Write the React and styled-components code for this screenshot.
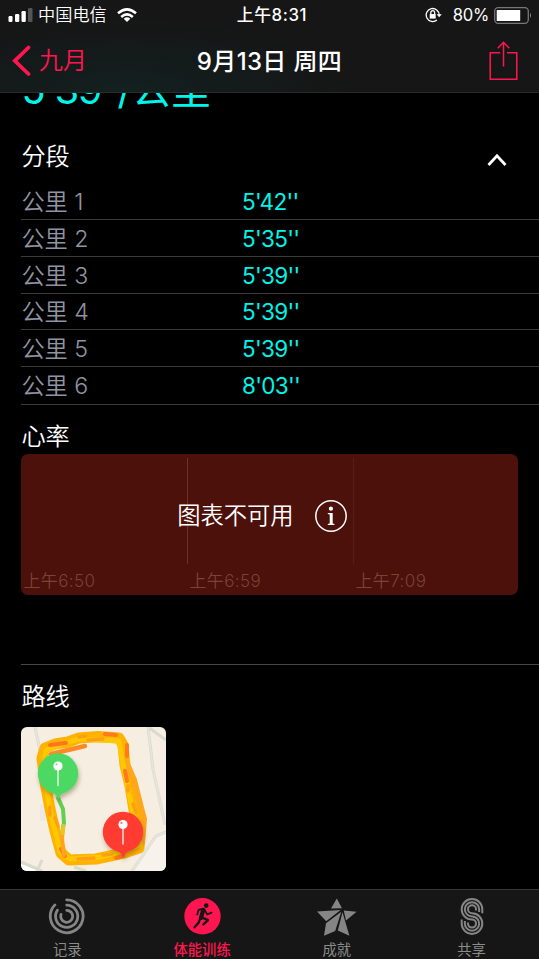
import React from "react";
import styled, { createGlobalStyle } from "styled-components";

const PINK = "#ff1650";
const CYAN = "#00f5ea";

const GlobalStyle = createGlobalStyle`
  * { box-sizing: border-box; }
  body { margin: 0; background: #000; }
`;

const Screen = styled.div`
  width: 539px;
  height: 959px;
  display: flex;
  flex-direction: column;
  overflow: hidden;
  background: #000;
  color: #fff;
  font-family: Inter, "Noto Sans CJK SC", sans-serif;
  white-space: nowrap;
`;

const Header = styled.header`
  flex: none;
  height: 93px;
  background: radial-gradient(ellipse 230px 75px at 125px 100%, #12211f, #141b1b 45%, #161616 100%);
  border-bottom: 1px solid #2b2b2b;
`;

const StatusBar = styled.div`
  height: 30px;
  display: grid;
  grid-template-columns: 1fr auto 1fr;
  align-items: center;
  padding: 0 7px 0 8px;
  font-size: 17px;
  line-height: 30px;
`;

const StatusGroup = styled.div`
  display: flex;
  align-items: center;
  justify-content: ${(p) => (p.$end ? "flex-end" : "flex-start")};
`;

const Carrier = styled.span`
  margin: 0 10px 0 5px;
  font-size: 17.2px;
  font-weight: 350;
`;

const Clock = styled.span`
  font-weight: 500;
  font-size: 16.8px;
  letter-spacing: 0.6px;
  padding-left: 4px;
`;

const Percent = styled.span`
  margin: 0 5px 0 11px;
  font-size: 16.6px;
  letter-spacing: -0.3px;
`;

const NavBar = styled.nav`
  height: 62px;
  display: grid;
  grid-template-columns: 1fr auto 1fr;
  align-items: center;
  padding: 0 20px 0 12px;
`;

const BackButton = styled.a`
  display: flex;
  align-items: center;
  gap: 8px;
  color: ${PINK};
  font-size: 24px;
  font-weight: 350;
  line-height: 34px;
`;

const NavTitle = styled.h1`
  margin: 0;
  padding: 1px 0 0 8px;
  font-size: 24px;
  line-height: 34px;
  font-weight: 500;
  letter-spacing: 0.35px;
`;

const ShareSlot = styled.div`
  justify-self: end;
  display: flex;
`;

const Content = styled.main`
  flex: 1;
  min-height: 0;
  overflow: hidden;
  padding-left: 21.4px;
`;

const PaceClip = styled.div`
  height: 41px;
  overflow: hidden;
`;

const Pace = styled.div`
  display: flex;
  margin-top: -27.5px;
  color: ${CYAN};
  font-size: 39.5px;
  line-height: 48px;
  letter-spacing: -1.2px;
`;

const PaceUnit = styled.span`
  margin-left: -1px;
  letter-spacing: 0;
`;

const SectionHead = styled.div`
  height: ${(p) => p.$height}px;
  display: flex;
  justify-content: space-between;
  align-items: flex-start;
  padding-right: 32px;
`;

const SectionTitle = styled.h2`
  margin: 0;
  padding-top: ${(p) => p.$top}px;
  font-size: 24.2px;
  font-weight: 350;
  line-height: 42px;
`;

const ChevronSlot = styled.div`
  display: flex;
  padding-top: 19px;
`;

const Splits = styled.div`
  display: grid;
  grid-template-rows: 37px 37px 37px 36px 37px 38px;
`;

const SplitRow = styled.div`
  display: grid;
  grid-template-columns: 220.6px 1fr;
  align-items: center;
  border-bottom: 1px solid #3b3b3b;
  font-size: 23.2px;
  line-height: 34px;
  padding-top: 1px;
`;

const SplitName = styled.span`
  color: #9194a2;
  font-weight: 350;
`;

const SplitTime = styled.span`
  color: ${CYAN};
  font-size: 22.5px;
  letter-spacing: -0.7px;
`;

const HeartChart = styled.div`
  width: 497px;
  height: 141px;
  display: grid;
  grid-template: 141px / 166px 166px 165px;
  border-radius: 7px;
  background: #4b110a;
`;

const ChartColumn = styled.div`
  grid-row: 1;
  grid-column: ${(p) => p.$col};
  display: flex;
  flex-direction: column;
  padding-top: 4px;
  color: #7c4137;
  font-size: 17px;
  font-weight: 350;
  line-height: 26px;
`;

const ChartLine = styled.div`
  height: 106px;
  margin-left: -0.4px;
  border-left: 1px solid ${(p) => p.$color};
`;

const ChartTime = styled.span`
  padding: 4px 0 0 2px;
  letter-spacing: 0.4px;
`;

const ChartNotice = styled.div`
  grid-area: 1 / 1 / 2 / 4;
  display: flex;
  align-items: center;
  gap: 20.4px;
  padding: 0 0 17px 155.8px;
  font-size: 23.3px;
  font-weight: 350;
  line-height: 34px;
`;

const Divider = styled.div`
  height: 1px;
  margin-top: 69px;
  background: #464646;
`;

const MapThumb = styled.div`
  width: 144.6px;
  height: 144px;
  border-radius: 6px;
  overflow: hidden;
`;

const TabBar = styled.footer`
  flex: none;
  height: 70px;
  display: grid;
  grid-template-columns: repeat(4, 1fr);
  background: #161616;
  border-top: 1px solid #383838;
`;

const Tab = styled.a`
  display: flex;
  flex-direction: column;
  align-items: center;
  padding-top: 8px;
  color: ${(p) => (p.$active ? PINK : "#8b8b8b")};
  font-size: 14.3px;
  font-weight: ${(p) => (p.$active ? 500 : 400)};
  line-height: 22px;
`;

const TabLabel = styled.span`
  margin-top: 3px;
`;

const SignalIcon = () => (
  <svg width="25" height="15" viewBox="0 0 25 15" fill="#fff">
    <rect x=".5" y="8" width="4" height="6" rx="1.2" />
    <rect x="7" y="6" width="4.3" height="8" rx="1.2" />
    <rect x="13.5" y="3" width="4.3" height="11" rx="1.2" />
    <rect x="20" y="0" width="4.5" height="14" rx="1.2" fill="#555" />
  </svg>
);

const WifiIcon = () => (
  <svg width="20" height="15" viewBox="0 0 20 15" fill="none" stroke="#fff" strokeWidth="2.5">
    <path d="M1 5.3Q10-2.6 19 5.3" />
    <path d="M4.2 9Q10 3.8 15.8 9" />
    <path d="M10 14L6.7 10.7Q10 8 13.3 10.7Z" fill="#fff" stroke="none" />
  </svg>
);

const LockIcon = () => (
  <svg width="17" height="16" viewBox="0 0 17 16" fill="none" stroke="#fff" strokeWidth="1.3">
    <path d="M14.2 8A6.5 6.5 0 1 0 11.9 13" />
    <path d="M11.6 7.2H16.8L14.2 10.3Z" fill="#fff" stroke="none" />
    <rect x="4.7" y="7" width="6" height="4.6" fill="#fff" stroke="none" />
    <path d="M5.8 7V5.6a1.9 1.9 0 0 1 3.8 0V7" />
  </svg>
);

const BatteryIcon = () => (
  <svg width="38" height="17" viewBox="0 0 38 17">
    <rect x=".7" y=".7" width="33.6" height="15.6" rx="3.5" fill="none" stroke="#777" strokeWidth="1.3" />
    <rect x="2.7" y="3" width="23.5" height="11" rx=".6" fill="#fff" />
    <path d="M36 5.7Q38 8.2 36 11Z" fill="#888" />
  </svg>
);

const BackIcon = () => (
  <svg width="19" height="32" viewBox="0 0 19 32" fill="none">
    <path d="M16.5 2.5L2.8 15.8L16.5 29" stroke={PINK} strokeWidth="3.8" strokeLinecap="round" />
  </svg>
);

const ShareIcon = () => (
  <svg width="30" height="40" viewBox="0 0 30 40" fill="none" stroke={PINK} strokeWidth="1.5">
    <path d="M11.2 11.7H1.2V38.2H27.8V11.7H18M14.5 25.5V2M8.7 7.2L14.5 1.3L20.3 7.2" />
  </svg>
);

const ChevronUp = () => (
  <svg width="20" height="14" viewBox="0 0 20 14" fill="none">
    <path d="M1.5 12L10 2.8L18.5 12" stroke="#fff" strokeWidth="2.8" />
  </svg>
);

const InfoIcon = () => (
  <svg width="34" height="34" viewBox="0 0 34 34" fill="#fff">
    <circle cx="17" cy="17" r="15.2" fill="none" stroke="#fff" strokeWidth="1.5" />
    <circle cx="16.9" cy="9.7" r="2.1" />
    <path d="M13.8 14h4.9v10.5l1.8.5v.9h-6.7V25l1.9-.5v-9l-1.9-.5z" />
  </svg>
);

const PinHead = ({ x, y, color }) => (
  <g transform={`translate(${x} ${y})`}>
    <path d="M-7 18Q-2 20 0 25.5Q3 20 7 18Z" fill={color} />
    <circle r="20.2" fill={color} />
    <path d="M0-3V12" stroke="#fff" strokeWidth="1.3" strokeLinecap="round" />
    <circle cy="-7.5" r="4.6" fill="#fff" />
    <circle cx="-1.5" cy="-9.1" r="1.1" fill={color} opacity=".7" />
  </g>
);

const RouteMap = () => (
  <svg width="145" height="144" viewBox="0 0 145 144" fill="none">
    <defs>
      <filter id="pinShadow" x="-30%" y="-30%" width="160%" height="170%">
        <feDropShadow dx="1" dy="3" stdDeviation="2.3" floodColor="#65451e" floodOpacity=".4" />
      </filter>
    </defs>
    <rect width="145" height="144" fill="#f5eee1" />
    <path d="M145 105L136 109L111 144H145Z" fill="#f7f2eb" />
    <path d="M0 135L21 144H0Z" fill="#fff" />
    <path d="M14 0L22 38M127 0L132 42L144 98M127 0L145 13M145 105L135 109L111 144M0 135L21 144M16 144L21 133M53 140L65 144" stroke="#dadacd" strokeWidth="3" />
    <path d="M14 0L22 38M127 0L132 42L144 98M145 105L135 109L111 144" stroke="#e7e6dc" strokeWidth="1.6" />
    <rect x="19" y="78" width="5" height="16" fill="#ebe8e7" />
    <g strokeLinejoin="round" strokeLinecap="round">
      <path d="M24 21L34 17L47 15L58 11L77 9.5L98 11L102 18L104 38L109 59L113 83L119 103L118 121L103 126L75 132L48 133L40 126L34 104L29 82L24 55L21 31Z" stroke="#ffb200" strokeWidth="11" />
      <path d="M103 30L113 53L119 77L123 92L121 116" stroke="#ffa61a" strokeWidth="6" />
      <path d="M25 23L57 12L98 14L103 43L112 86L119 118L80 130L49 132L39 124L30 87L22 42Z" stroke="#ffc800" strokeWidth="5" />
      <path d="M29 18L45 16" stroke="#ff7420" strokeWidth="4" />
      <path d="M84 7L95 8M106 18V29M104 44L106 54M40 122L44 129M95 131L102 129" stroke="#ff7a1c" strokeWidth="4" />
      <path d="M30 27L64 19" stroke="#ff8a24" strokeWidth="4.5" />
      <path d="M42 100L41 112L43 128" stroke="#ffa41a" strokeWidth="4" />
      <path d="M29 80V88M34 91L37 99M112 77L115 85M57 132L73 131M111 117L119 110M67 13L82 12M58 10L65 9M107 59V64M82 128L91 127" stroke="#ffa014" strokeWidth="3.5" />
      <path d="M37 71L42 82L43 96L42 100" stroke="#62ce53" strokeWidth="4" />
      <path d="M42.5 99L41.5 106" stroke="#e4c72b" strokeWidth="4" />
    </g>
    <g filter="url(#pinShadow)"><PinHead x={37} y={46.5} color="#4cd964" /></g>
    <g filter="url(#pinShadow)"><PinHead x={102} y={105} color="#ff3b30" /></g>
  </svg>
);

const ActivityIcon = () => (
  <svg width="38" height="38" viewBox="0 0 38 38" fill="none" stroke="#858585" strokeWidth="2.8" strokeLinecap="round">
    <path d="M18.7 1.9A16.4 16.4 0 1 1 6.9 6.9" />
    <path d="M18.7 7.2A11.1 11.1 0 1 1 9.4 12.2" />
    <path d="M18.7 12.3A6 6 0 1 1 13 16.4" />
  </svg>
);

const RunnerIcon = () => (
  <svg width="38" height="38" viewBox="0 0 38 38">
    <circle cx="19.5" cy="18.3" r="18.2" fill={PINK} />
    <circle cx="23.2" cy="7.6" r="2.3" fill="#161616" />
    <g transform="translate(0 -.6)" fill="none" stroke="#161616" strokeLinecap="round" strokeLinejoin="round">
      <path d="M20.3 12.4L18 20.5" strokeWidth="4.2" />
      <path d="M19.4 11.4L15.6 12.5L14.2 17M21.5 12.7L24.3 17L28.6 15.2" strokeWidth="1.8" />
      <path d="M18.7 20L25 22.7L20.4 27M17 21.5L15.7 25.2L11.5 29.8" strokeWidth="2.3" />
    </g>
  </svg>
);

const AwardIcon = () => (
  <svg width="40" height="38" viewBox="0 0 40 38" fill="#858585">
    <path d="M19.8 .5L25 10.2L14 10.6ZM0 13.6L23.6 12L9.2 23.3ZM24.3 13.8L18.2 33L7 37.8L9 25.3ZM25.5 14.3L32.4 37.8L20.8 32.4ZM26.7 12.5L39.6 13.8L29 22.6Z" />
  </svg>
);

const SharingIcon = () => (
  <svg width="24" height="38" viewBox="0 0 24 38" fill="none" stroke="#858585" strokeWidth="2">
    <path d="M22.3 15.3V11.3A10.3 10.3 0 1 0 12 21.6A4 4 0 1 1 8 25.6V24.5" />
    <path d="M19.15 14V11.3A7.15 7.15 0 1 0 12 18.45A7.15 7.15 0 1 1 4.85 25.6V22.9" />
    <path d="M16 12.4V11.3A4 4 0 1 0 12 15.3A10.3 10.3 0 1 1 1.7 25.6V21.6" />
  </svg>
);

const splits = ["5'42''", "5'35''", "5'39''", "5'39''", "5'39''", "8'03''"];

const chartColumns = [
  { time: "上午6:50", line: "transparent" },
  { time: "上午6:59", line: "#713022" },
  { time: "上午7:09", line: "#5c1d13" },
];

const tabs = [
  { label: "记录", Icon: ActivityIcon },
  { label: "体能训练", Icon: RunnerIcon, active: true },
  { label: "成就", Icon: AwardIcon },
  { label: "共享", Icon: SharingIcon },
];

export default function App() {
  return (
    <Screen>
      <GlobalStyle />
      <Header>
        <StatusBar>
          <StatusGroup>
            <SignalIcon />
            <Carrier>中国电信</Carrier>
            <WifiIcon />
          </StatusGroup>
          <Clock>上午8:31</Clock>
          <StatusGroup $end>
            <LockIcon />
            <Percent>80%</Percent>
            <BatteryIcon />
          </StatusGroup>
        </StatusBar>
        <NavBar>
          <BackButton><BackIcon />九月</BackButton>
          <NavTitle>9月13日 周四</NavTitle>
          <ShareSlot><ShareIcon /></ShareSlot>
        </NavBar>
      </Header>
      <Content>
        <PaceClip>
          <Pace>5'39"<PaceUnit>/公里</PaceUnit></Pace>
        </PaceClip>
        <SectionHead $height={49}>
          <SectionTitle $top={2}>分段</SectionTitle>
          <ChevronSlot><ChevronUp /></ChevronSlot>
        </SectionHead>
        <Splits>
          {splits.map((time, i) => (
            <SplitRow key={i}>
              <SplitName>公里 {i + 1}</SplitName>
              <SplitTime>{time}</SplitTime>
            </SplitRow>
          ))}
        </Splits>
        <SectionHead $height={49}>
          <SectionTitle $top={11}>心率</SectionTitle>
        </SectionHead>
        <HeartChart>
          {chartColumns.map((c, i) => (
            <ChartColumn key={c.time} $col={i + 1}>
              <ChartLine $color={c.line} />
              <ChartTime>{c.time}</ChartTime>
            </ChartColumn>
          ))}
          <ChartNotice>图表不可用<InfoIcon /></ChartNotice>
        </HeartChart>
        <Divider />
        <SectionHead $height={62.4}>
          <SectionTitle $top={11}>路线</SectionTitle>
        </SectionHead>
        <MapThumb><RouteMap /></MapThumb>
      </Content>
      <TabBar>
        {tabs.map(({ label, Icon, active }) => (
          <Tab key={label} $active={active}>
            <Icon />
            <TabLabel>{label}</TabLabel>
          </Tab>
        ))}
      </TabBar>
    </Screen>
  );
}
